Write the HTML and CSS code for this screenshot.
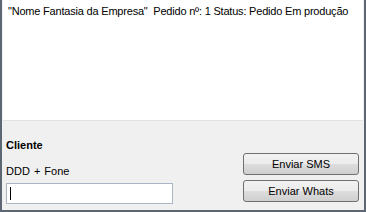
FILE: index.html
```
<!DOCTYPE html>
<html lang="pt">

<head>
    <meta charset="UTF-8">
    <meta name="viewport" content="width=device-width, initial-scale=1.0">
    <title>Pedido</title>
    <link rel="stylesheet" href="styles.css">
</head>

<body>
    <div class="window">
        <div class="status-pane">
            <p class="status-line">"Nome Fantasia da Empresa"&nbsp; Pedido nº: 1 Status: Pedido Em produção</p>
        </div>
        <div class="bottom">
            <div class="cliente">
                <h3>Cliente</h3>
                <label for="fone">DDD + Fone</label>
                <div class="input-box"><span class="caret"></span></div>
            </div>
            <div class="actions">
                <button class="btn">Enviar SMS</button>
                <button class="btn">Enviar Whats</button>
            </div>
        </div>
    </div>
</body>

</html>
```

FILE: styles.css
```
html,
body {
    margin: 0;
    width: 366px;
    height: 212px;
    overflow: hidden;
}

body {
    background: #f0f0f0;
    font: 11px/13px "Liberation Sans", Arial, sans-serif;
    color: #000;
}

.window {
    box-sizing: border-box;
    width: 366px;
    height: 212px;
    border-left: 2px solid #5d6774;
    border-right: 2px solid #5d6774;
    border-bottom: 2px solid #5d6774;
    display: flex;
    flex-direction: column;
}

.status-pane {
    height: 120px;
    margin: 0 1px;
    background: #fff;
    border-bottom: 1px solid #e2e2e2;
}

.status-line {
    margin: 0;
    padding: 5px 0 0 5px;
    letter-spacing: -0.2px;
    white-space: nowrap;
}

.bottom {
    flex: 1;
    display: flex;
    justify-content: space-between;
    align-items: flex-end;
    padding: 0 5px 6px 4px;
}

.cliente h3 {
    margin: 0 0 13px;
    font-size: 11px;
    font-weight: bold;
}

.cliente label {
    display: block;
    margin-bottom: 5px;
    word-spacing: 1px;
}

.input-box {
    box-sizing: border-box;
    width: 167px;
    height: 21px;
    background: #fff;
    border: 1px solid #a9b6c6;
    padding: 3px 3px;
}

.caret {
    display: block;
    width: 1px;
    height: 13px;
    background: #000;
}

.actions {
    display: flex;
    flex-direction: column;
    gap: 5px;
    margin-bottom: 2px;
}

.btn {
    box-sizing: border-box;
    width: 116px;
    height: 22px;
    border: 1px solid #707070;
    border-radius: 3px;
    background: linear-gradient(#f2f2f2 0%, #ebebeb 50%, #dddddd 51%, #cfcfcf 100%);
    font: 11px "Liberation Sans", Arial, sans-serif;
    color: #000;
    padding: 0;
}
```
